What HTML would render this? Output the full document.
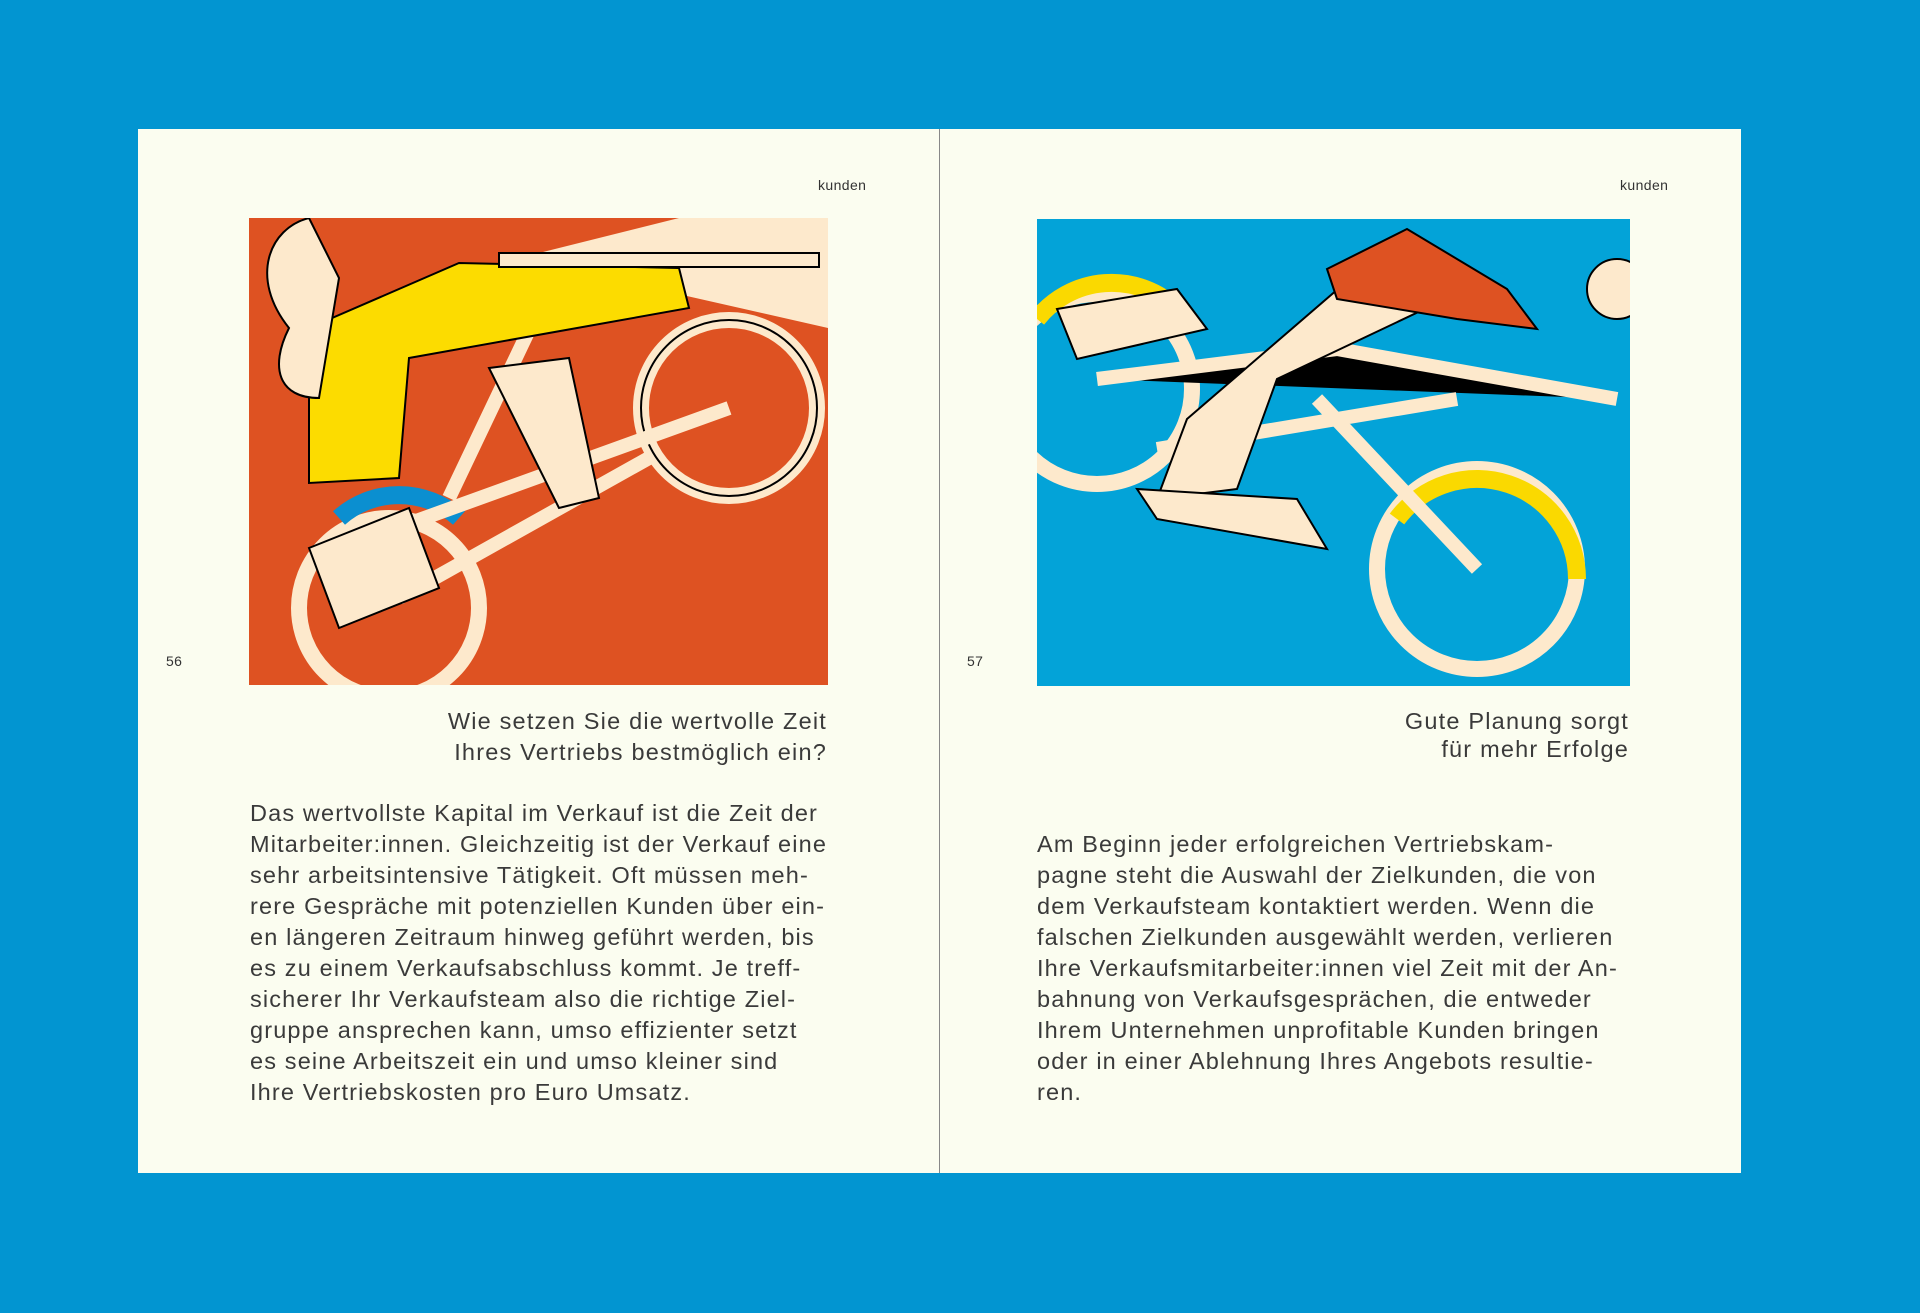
<!DOCTYPE html>
<html><head><meta charset="utf-8"><style>
body{margin:0;width:1920px;height:1313px;background:#0295d1;position:relative;overflow:hidden;font-family:"Liberation Sans",sans-serif;color:#333}
.page{position:absolute;top:129px;height:1044px;background:#fbfdf0}
.l{left:138px;width:801px;border-right:1px solid #888}
.r{left:940px;width:801px}
.t{position:absolute;font-size:14px;color:#333;letter-spacing:0.4px}
.cap{position:absolute;font-size:23.5px;line-height:31px;text-align:right;color:#3a3a3a;letter-spacing:1.2px}
.body{position:absolute;font-size:23.5px;line-height:31px;color:#3a3a3a;white-space:nowrap;letter-spacing:1.15px}
svg{position:absolute}
</style></head><body>
<div class="page l"></div><div class="page r"></div>
<div class="t" style="left:818px;top:177px">kunden</div>
<div class="t" style="left:1620px;top:177px">kunden</div>
<div class="t" style="left:166px;top:653px">56</div>
<div class="t" style="left:967px;top:653px">57</div>
<svg style="left:249px;top:218px" width="579" height="467" viewBox="0 0 579 467">
<rect width="579" height="467" fill="#de5222"/>
<polygon points="430,0 579,0 579,110 270,40" fill="#fde9cc"/>
<circle cx="480" cy="190" r="88" fill="none" stroke="#fde9cc" stroke-width="16"/>
<circle cx="480" cy="190" r="88" fill="none" stroke="#000" stroke-width="2"/>
<circle cx="140" cy="390" r="90" fill="none" stroke="#fde9cc" stroke-width="16"/>
<path d="M90 300 A90 90 0 0 1 210 300" stroke="#0b8fd0" stroke-width="18" fill="none"/>
<path d="M120 320 L480 190 M200 280 L300 70 M150 380 L400 240" stroke="#fde9cc" stroke-width="14"/>
<path d="M60 110 L210 45 L430 50 L440 90 L160 140 L150 260 L60 265 Z" fill="#fcdc00" stroke="#000" stroke-width="2"/>
<path d="M60 0 C20 10 0 60 40 110 C20 150 30 180 70 180 L90 60 Z" fill="#fde9cc" stroke="#000" stroke-width="2"/>
<path d="M240 150 L320 140 L350 280 L310 290 Z" fill="#fde9cc" stroke="#000" stroke-width="2"/>
<path d="M60 330 L160 290 L190 370 L90 410 Z" fill="#fde9cc" stroke="#000" stroke-width="2"/>
<rect x="250" y="35" width="320" height="14" fill="#fde9cc" stroke="#000" stroke-width="2"/>
</svg>
<svg style="left:1037px;top:219px" width="593" height="467" viewBox="0 0 593 467">
<rect width="593" height="467" fill="#03a3d8"/>
<circle cx="440" cy="350" r="100" fill="none" stroke="#fde9cc" stroke-width="16"/>
<path d="M360 300 A100 100 0 0 1 540 360" stroke="#fad900" stroke-width="18" fill="none"/>
<circle cx="60" cy="170" r="95" fill="none" stroke="#fde9cc" stroke-width="16"/>
<path d="M0 100 A95 95 0 0 1 140 90" stroke="#fad900" stroke-width="18" fill="none"/>
<path d="M60 160 L300 130 L580 180 M280 180 L440 350 M120 230 L420 180" stroke="#fde9cc" stroke-width="14"/>
<path d="M150 200 L330 45 L410 40 L430 70 L240 160 L200 270 L120 280 Z" fill="#fde9cc" stroke="#000" stroke-width="2"/>
<path d="M290 50 L370 10 L470 70 L500 110 L420 100 L300 80 Z" fill="#de5222" stroke="#000" stroke-width="2"/>
<path d="M100 270 L260 280 L290 330 L120 300 Z" fill="#fde9cc" stroke="#000" stroke-width="2"/>
<circle cx="580" cy="70" r="30" fill="#fde9cc" stroke="#000" stroke-width="2"/>
<path d="M20 90 L140 70 L170 110 L40 140 Z" fill="#fde9cc" stroke="#000" stroke-width="2"/>
</svg>
<div class="cap" style="right:1093px;top:706px">Wie setzen Sie die wertvolle Zeit<br>Ihres Vertriebs bestmöglich ein?</div>
<div class="cap" style="right:291px;top:707px;line-height:28px">Gute Planung sorgt<br>für mehr Erfolge</div>
<div class="body" style="left:250px;top:798px">Das wertvollste Kapital im Verkauf ist die Zeit der<br>Mitarbeiter:innen. Gleichzeitig ist der Verkauf eine<br>sehr arbeitsintensive Tätigkeit. Oft müssen meh-<br>rere Gespräche mit potenziellen Kunden über ein-<br>en längeren Zeitraum hinweg geführt werden, bis<br>es zu einem Verkaufsabschluss kommt. Je treff-<br>sicherer Ihr Verkaufsteam also die richtige Ziel-<br>gruppe ansprechen kann, umso effizienter setzt<br>es seine Arbeitszeit ein und umso kleiner sind<br>Ihre Vertriebskosten pro Euro Umsatz.</div>
<div class="body" style="left:1037px;top:829px">Am Beginn jeder erfolgreichen Vertriebskam-<br>pagne steht die Auswahl der Zielkunden, die von<br>dem Verkaufsteam kontaktiert werden. Wenn die<br>falschen Zielkunden ausgewählt werden, verlieren<br>Ihre Verkaufsmitarbeiter:innen viel Zeit mit der An-<br>bahnung von Verkaufsgesprächen, die entweder<br>Ihrem Unternehmen unprofitable Kunden bringen<br>oder in einer Ablehnung Ihres Angebots resultie-<br>ren.</div>
</body></html>
